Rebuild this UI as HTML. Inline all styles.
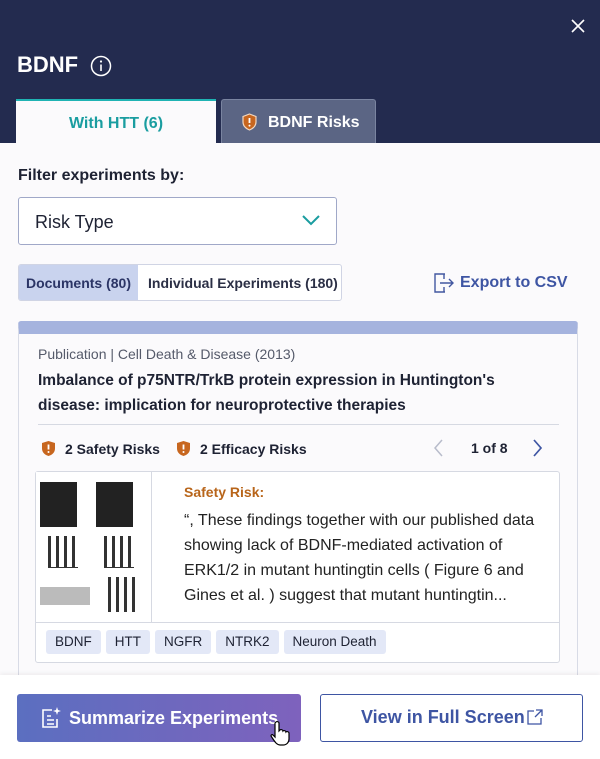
<!DOCTYPE html>
<html><head><meta charset="utf-8"><style>
*{box-sizing:border-box;margin:0;padding:0}
body{width:600px;height:759px;overflow:hidden;background:#fbfafc;font-family:"Liberation Sans",sans-serif;position:relative;color:#1e2233}
.hdr{position:absolute;left:0;top:0;width:600px;height:143px;background:#232b4f}
.abs{position:absolute}
.tab1{left:16px;top:99px;width:200px;height:45px;background:#fbfafc;border-top:2px solid #1fb3b3;color:#1a9da0;font-weight:bold;font-size:16px;text-align:center;line-height:45px}
.tab2{left:221px;top:99px;width:155px;height:44px;background:#5b6584;border:1px solid #7a84a0;border-bottom:none;border-radius:3px 3px 0 0;color:#fff;font-weight:bold;font-size:16px;line-height:46px;padding-left:46px}
.sel{left:18px;top:197px;width:319px;height:48px;border:1px solid #a0a8c8;border-radius:3px;background:#fff;font-size:18px;line-height:48px;padding-left:16px}
.seg{left:18px;top:264px;width:324px;height:37px;border:1px solid #d0d4e4;border-radius:3px;background:#fff;font-size:14px;line-height:36px;font-weight:bold;overflow:hidden}
.card{left:18px;top:321px;width:560px;height:360px;border:1px solid #d8dbe6;border-top:13px solid #a5b3de;border-radius:3px;background:#fbfafc}
.tag{display:inline-block;background:#e3e8f7;border-radius:3px;padding:0 9px;height:24px;line-height:24px;font-size:13.5px;margin-right:5px}
.foot{left:0;top:675px;width:600px;height:84px;background:#fff;box-shadow:0 -2px 4px rgba(0,0,0,.05)}
</style></head><body>
<div class="hdr"></div>
<svg class="abs" style="left:571px;top:19px" width="14" height="14"><path d="M1 1L13 13M13 1L1 13" stroke="#fff" stroke-width="1.6"/></svg>
<div class="abs" style="left:17px;top:52px;color:#fff;font-size:22px;font-weight:bold">BDNF</div>
<svg class="abs" style="left:90px;top:55px" width="22" height="22"><circle cx="11" cy="11" r="9.5" fill="none" stroke="#fff" stroke-width="1.5"/><path d="M11 9.5V16" stroke="#fff" stroke-width="1.6"/><circle cx="11" cy="6.5" r="1.1" fill="#fff"/></svg>
<div class="abs tab1">With HTT (6)</div>
<div class="abs tab2">BDNF Risks</div>
<svg class="abs" style="left:241px;top:113px" width="17" height="18"><path d="M8.5 1L15 3.5V9c0 4-3 6.5-6.5 8C5 15.5 2 13 2 9V3.5z" fill="#c7661f" stroke="#f3d8c0" stroke-width="1.2"/><path d="M8.5 5v5" stroke="#fff" stroke-width="1.8"/><circle cx="8.5" cy="12.6" r="1" fill="#fff"/></svg>
<div class="abs" style="left:18px;top:167px;font-size:16px;font-weight:bold">Filter experiments by:</div>
<div class="abs sel">Risk Type</div>
<svg class="abs" style="left:302px;top:214px" width="18" height="12"><path d="M1 2L9 10L17 2" fill="none" stroke="#1a9da0" stroke-width="2"/></svg>
<div class="abs seg"><span style="display:inline-block;width:119px;background:#c9d3ee;color:#2b3566;text-align:center">Documents (80)</span><span style="display:inline-block;padding-left:10px;color:#2b2f45">Individual Experiments (180)</span></div>
<svg class="abs" style="left:433px;top:272px" width="22" height="22"><path d="M12 2H2V20H12M11 7V2M11 15V20M7 11H20M16 7L20 11L16 15" fill="none" stroke="#4257a0" stroke-width="1.4"/></svg>
<div class="abs" style="left:460px;top:274px;font-size:16px;font-weight:bold;color:#3e55a3">Export to CSV</div>
<div class="abs card"></div>
<div class="abs" style="left:38px;top:346px;font-size:14px;color:#555a6a">Publication | Cell Death &amp; Disease (2013)</div>
<div class="abs" style="left:38px;top:368px;width:510px;font-size:15.5px;font-weight:bold;line-height:25px">Imbalance of p75NTR/TrkB protein expression in Huntington's disease: implication for neuroprotective therapies</div>
<div class="abs" style="left:38px;top:424px;width:521px;height:1px;background:#d6d9e2"></div>
<svg class="abs" style="left:41px;top:440px" width="15" height="17"><path d="M7.5 1L14 3V8.5c0 4-3 6.5-6.5 7.5C4 15 1 12.5 1 8.5V3z" fill="#c7661f"/><path d="M7.5 4.5v5" stroke="#fff" stroke-width="1.8"/><circle cx="7.5" cy="12" r="1" fill="#fff"/></svg>
<div class="abs" style="left:65px;top:441px;font-size:14px;font-weight:bold">2 Safety Risks</div>
<svg class="abs" style="left:176px;top:440px" width="15" height="17"><path d="M7.5 1L14 3V8.5c0 4-3 6.5-6.5 7.5C4 15 1 12.5 1 8.5V3z" fill="#c7661f"/><path d="M7.5 4.5v5" stroke="#fff" stroke-width="1.8"/><circle cx="7.5" cy="12" r="1" fill="#fff"/></svg>
<div class="abs" style="left:200px;top:441px;font-size:14px;font-weight:bold">2 Efficacy Risks</div>
<svg class="abs" style="left:434px;top:439px" width="10" height="18"><path d="M8 1L1 9L8 17" fill="none" stroke="#b8bccb" stroke-width="1.5"/></svg>
<div class="abs" style="left:471px;top:440px;font-size:14px;font-weight:bold">1 of 8</div>
<svg class="abs" style="left:532px;top:439px" width="10" height="18"><path d="M2 1L9 9L2 17" fill="none" stroke="#3e55a3" stroke-width="1.7"/></svg>
<div class="abs" style="left:35px;top:471px;width:525px;height:192px;border:1px solid #d6d9e2;border-radius:3px;background:#fff"></div>
<div class="abs" style="left:36px;top:472px;width:116px;height:150px;background:#fff;border-right:1px solid #d6d9e2">
<div class="abs" style="left:4px;top:10px;width:37px;height:45px;background:#222"></div>
<div class="abs" style="left:60px;top:10px;width:37px;height:45px;background:#222"></div>
<div class="abs" style="left:12px;top:64px;width:30px;height:32px;border-bottom:1px solid #000;background:repeating-linear-gradient(90deg,#000 0 3px,#fff 3px 8px);opacity:.8"></div>
<div class="abs" style="left:68px;top:64px;width:30px;height:32px;border-bottom:1px solid #000;background:repeating-linear-gradient(90deg,#000 0 3px,#fff 3px 8px);opacity:.8"></div>
<div class="abs" style="left:4px;top:115px;width:50px;height:18px;background:#bbb"></div>
<div class="abs" style="left:72px;top:105px;width:30px;height:35px;background:repeating-linear-gradient(90deg,#000 0 3px,#fff 3px 8px);opacity:.8"></div>
</div>
<div class="abs" style="left:184px;top:484px;font-size:14px;font-weight:bold;color:#b8651a">Safety Risk:</div>
<div class="abs" style="left:184px;top:508px;width:370px;font-size:16px;line-height:25px;color:#222">“, These findings together with our published data showing lack of BDNF-mediated activation of ERK1/2 in mutant huntingtin cells ( Figure 6 and Gines et al. ) suggest that mutant huntingtin...</div>
<div class="abs" style="left:36px;top:622px;width:523px;height:1px;background:#d6d9e2"></div>
<div class="abs" style="left:46px;top:630px;white-space:nowrap"><span class="tag">BDNF</span><span class="tag">HTT</span><span class="tag">NGFR</span><span class="tag">NTRK2</span><span class="tag">Neuron Death</span></div>
<div class="abs foot"></div>
<div class="abs" style="left:17px;top:694px;width:284px;height:48px;border-radius:3px;background:linear-gradient(90deg,#5b6fc0,#7e62bd);color:#fff;font-size:18px;font-weight:bold;line-height:48px;padding-left:52px">Summarize Experiments</div>
<svg class="abs" style="left:39px;top:706px" width="24" height="24"><path d="M13 4H4V21H18V13" fill="none" stroke="#fff" stroke-width="1.6"/><path d="M8 10h4M8 14h7M8 18h7" stroke="#fff" stroke-width="1.6"/><path d="M18 1L19 4L22 5L19 6L18 9L17 6L14 5L17 4z" fill="#fff"/></svg>
<div class="abs" style="left:320px;top:694px;width:263px;height:48px;border:1.5px solid #3e55a3;border-radius:3px;background:#fff;color:#3e55a3;font-size:18px;font-weight:bold;line-height:45px;padding-left:40px">View in Full Screen</div>
<svg class="abs" style="left:527px;top:709px" width="16" height="16"><path d="M7 2H1V15H14V9M9 1H15V7M15 1L8 8" fill="none" stroke="#3e55a3" stroke-width="1.3"/></svg>
<svg class="abs" style="left:270px;top:720px" width="22" height="26"><path d="M6 2c1-1 3 0 3 1v8l1-1c1-1 3 0 3 1 1-1 3 0 3 1 1-1 3 0 3 1v6c0 3-2 6-6 6h-3c-3 0-5-3-7-6l-2-3c0-1 1-2 2-1l2 2V3z" fill="#fff" stroke="#000" stroke-width="1.2"/></svg>
</body></html>
